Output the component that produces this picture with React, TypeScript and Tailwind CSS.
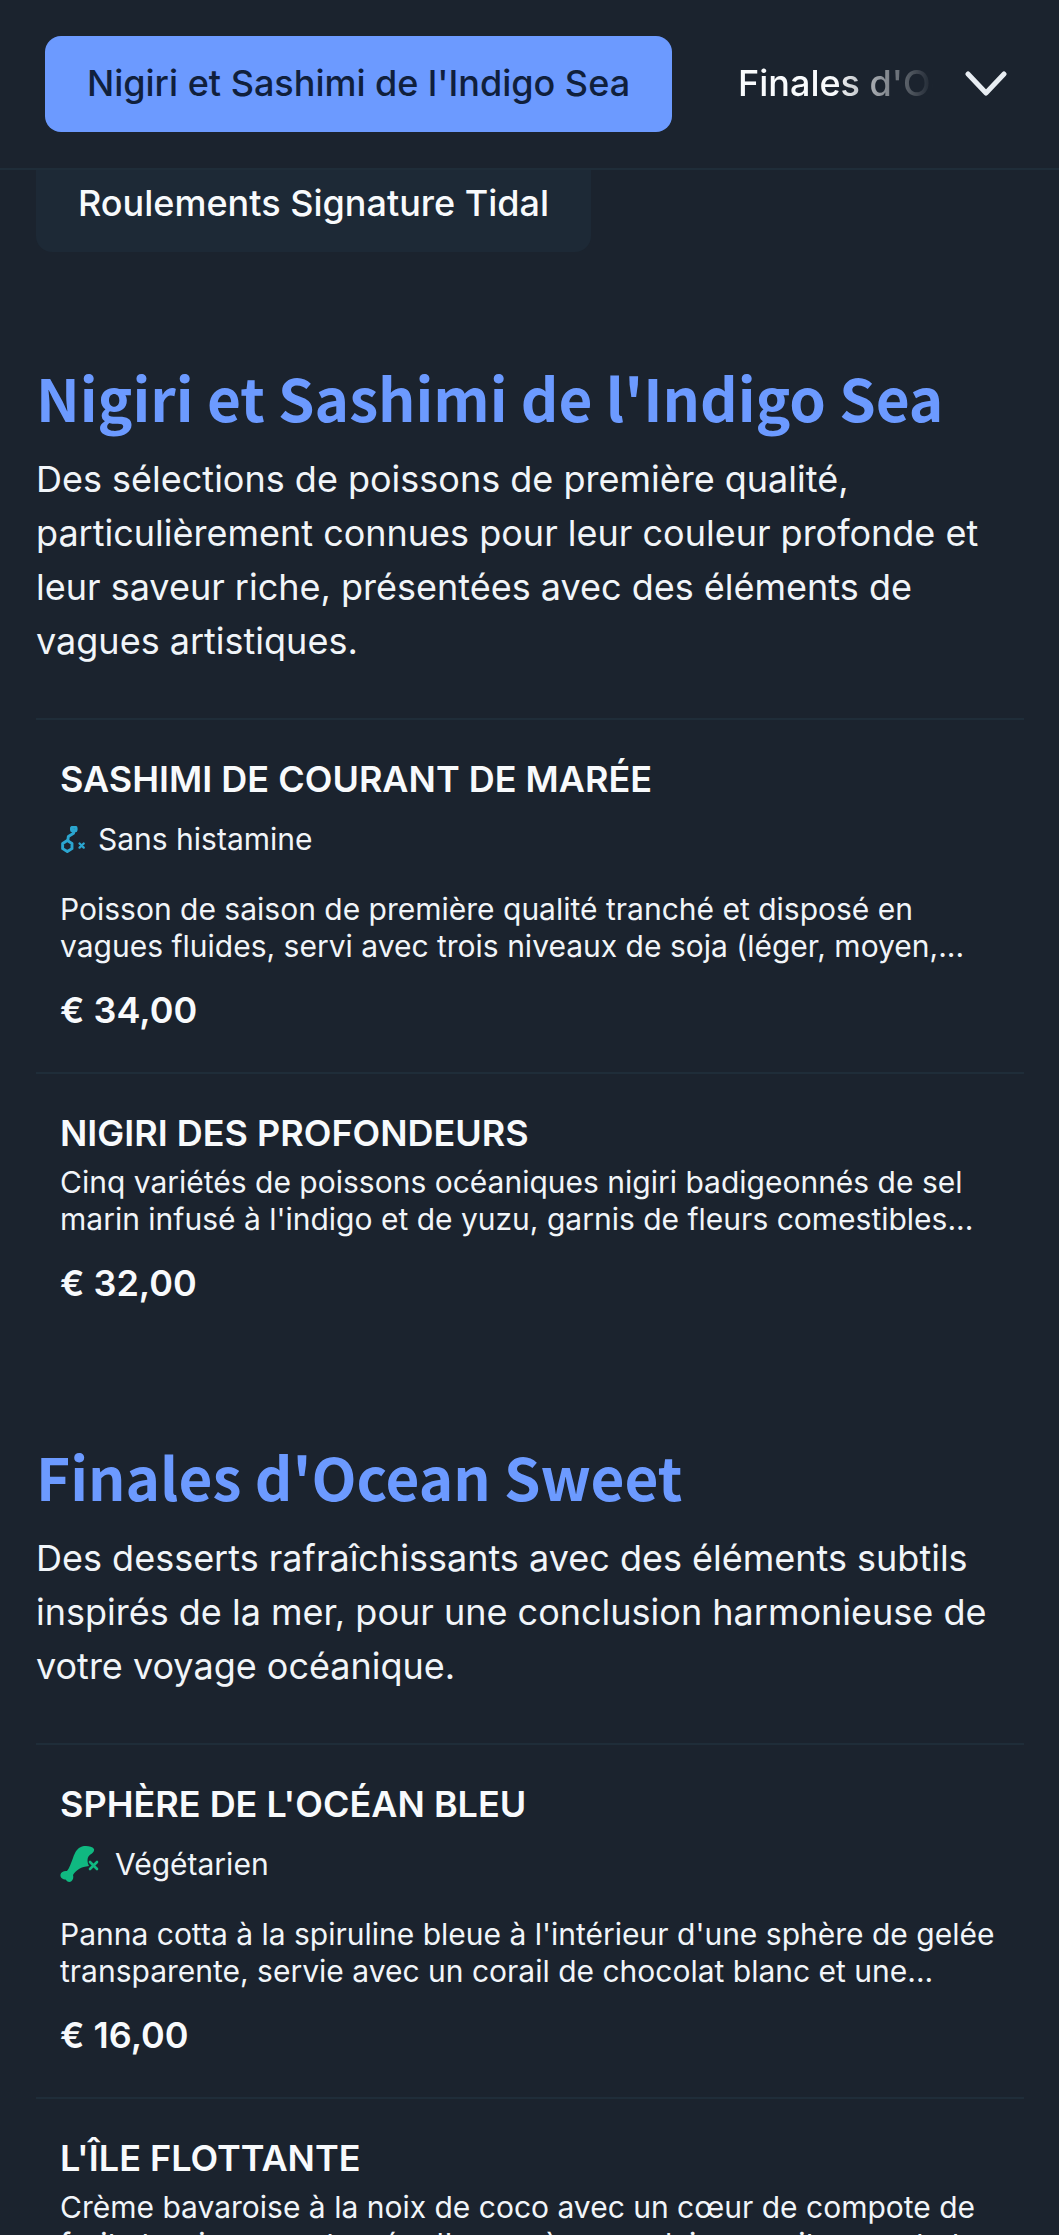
import React from "react";

function Histamine() {
  return (
    <svg viewBox="0 0 24 26" className="w-[25px] h-[27px] shrink-0" fill="none" stroke="#2ba6d0" strokeWidth="2.8" strokeLinejoin="round" strokeLinecap="round">
      <path d="M7 14 L11.5 16.8 L11.5 21.8 L7 24.6 L2.5 21.8 L2.5 16.8 Z" />
      <path d="M7.5 14 L8 10 L13 7 L13 3.5" />
      <rect x="11" y="1.2" width="4.5" height="3.6" rx="1" />
      <path d="M18.8 16.8 L22.8 20.8 M22.8 16.8 L18.8 20.8" strokeWidth="2.2" />
    </svg>
  );
}

function Drumstick() {
  return (
    <svg viewBox="0 0 42 36" className="w-[42px] h-[36px] shrink-0">
      <path fill="#10b981" d="M22 0.5 C26 -0.5 32 0 34 3 C34.5 5 33 6.5 32 7.5 C29 9 27.5 11 27.5 14 C27.5 16.5 28 18 29 20 C25 20.5 22 21 19 23 C16 25 14 27 13 29 C14 32 12.5 35.5 9.5 36 C7.5 36 6.5 34.5 5.5 33.5 C2.5 33.5 0 31.5 0.5 28.5 C1 26 4 24.5 7 25 C9.5 22 11 17 13 12 C15 6 17.5 2 22 0.5 Z" />
      <path stroke="#10b981" strokeWidth="2.6" strokeLinecap="round" d="M30 16 L37 23 M37 16 L30 23" />
    </svg>
  );
}

type Item = { title: string; badge?: { icon: React.ReactNode; label: string }; desc: string; price?: string };

function MenuItem({ item }: { item: Item }) {
  return (
    <div className="border-t-[2px] border-[#1f2d39] px-[24px] pt-[36px]">
      <h3 className="text-[36px] leading-[46px] font-semibold text-[#f8fafc]">{item.title}</h3>
      {item.badge ? (
        <div className="flex items-center gap-[13px] mt-[14px] mb-[29px] h-[46px] text-[30px] text-[#f1f5f9]">
          {item.badge.icon}
          <span>{item.badge.label}</span>
        </div>
      ) : (
        <div className="h-[8px]" />
      )}
      <p className="text-[30px] leading-[36.5px] text-[#f1f5f9]">{item.desc}</p>
      {item.price && <p className="text-[36px] leading-[46px] font-semibold text-[#f8fafc] mt-[23px] pb-[39px]">{item.price}</p>}
    </div>
  );
}

function Section({ title, desc, items }: { title: string; desc: React.ReactNode; items: Item[] }) {
  return (
    <section>
      <h2 className="text-[58.5px] leading-[72px] font-bold text-[#6c9aff] [font-family:'Noto_Sans_CJK_SC',sans-serif]">{title}</h2>
      <p className="text-[36px] leading-[54px] text-[#f1f5f9] mt-[19px] mb-[50px]">{desc}</p>
      {items.map((it) => (
        <MenuItem key={it.title} item={it} />
      ))}
    </section>
  );
}

export default function App() {
  return (
    <div className="w-[1059px] h-[2235px] overflow-hidden bg-[#1b232e] [font-family:Inter,sans-serif]">
      <header className="h-[170px] border-b-[2px] border-[#1f2d39] flex items-start pl-[45px] pt-[36px]">
        <div className="w-[627px] h-[96px] rounded-[16px] bg-[#6c9aff] text-[#10203c] text-[36px] font-medium flex items-center justify-center shrink-0 pb-[2px]">
          Nigiri et Sashimi de l&apos;Indigo Sea
        </div>
        <div className="ml-[66px] w-[204px] h-[96px] overflow-hidden flex items-center whitespace-nowrap text-[36px] font-medium text-[#f8fafc] [mask-image:linear-gradient(to_right,black_48%,transparent_96%)] pb-[2px]">
          Finales d&apos;Ocean Sweet
        </div>
        <svg viewBox="0 0 42 26" className="w-[42px] h-[26px] mt-[35px] ml-[23px] shrink-0" fill="none" stroke="#e8edf2" strokeWidth="5" strokeLinecap="round" strokeLinejoin="round">
          <path d="M3 3 L21 22 L39 3" />
        </svg>
      </header>

      <div className="w-[555px] h-[82px] ml-[36px] rounded-b-[16px] bg-[#1d2936] flex items-start pl-[42px] pt-[11px] text-[36px] leading-[44px] font-medium text-[#f8fafc]">
        Roulements Signature Tidal
      </div>

      <main className="px-[36px] pt-[109px] w-[1060px]">
        <Section
          title="Nigiri et Sashimi de l'Indigo Sea"
          desc={<>Des sélections de poissons de première qualité,<br />particulièrement connues pour leur couleur profonde et<br />leur saveur riche, présentées avec des éléments de<br />vagues artistiques.</>}
          items={[
            {
              title: "SASHIMI DE COURANT DE MARÉE",
              badge: { icon: <Histamine />, label: "Sans histamine" },
              desc: "Poisson de saison de première qualité tranché et disposé en vagues fluides, servi avec trois niveaux de soja (léger, moyen,...",
              price: "€ 34,00",
            },
            {
              title: "NIGIRI DES PROFONDEURS",
              desc: "Cinq variétés de poissons océaniques nigiri badigeonnés de sel marin infusé à l'indigo et de yuzu, garnis de fleurs comestibles...",
              price: "€ 32,00",
            },
          ]}
        />
        <div className="h-[95px]" />
        <Section
          title="Finales d'Ocean Sweet"
          desc={<>Des desserts rafraîchissants avec des éléments subtils<br />inspirés de la mer, pour une conclusion harmonieuse de<br />votre voyage océanique.</>}
          items={[
            {
              title: "SPHÈRE DE L'OCÉAN BLEU",
              badge: { icon: <Drumstick />, label: "Végétarien" },
              desc: "Panna cotta à la spiruline bleue à l'intérieur d'une sphère de gelée transparente, servie avec un corail de chocolat blanc et une...",
              price: "€ 16,00",
            },
            {
              title: "L'ÎLE FLOTTANTE",
              desc: "Crème bavaroise à la noix de coco avec un cœur de compote de fruits tropicaux, entourée d'une crème anglaise au citron vert et...",
            },
          ]}
        />
      </main>
    </div>
  );
}
